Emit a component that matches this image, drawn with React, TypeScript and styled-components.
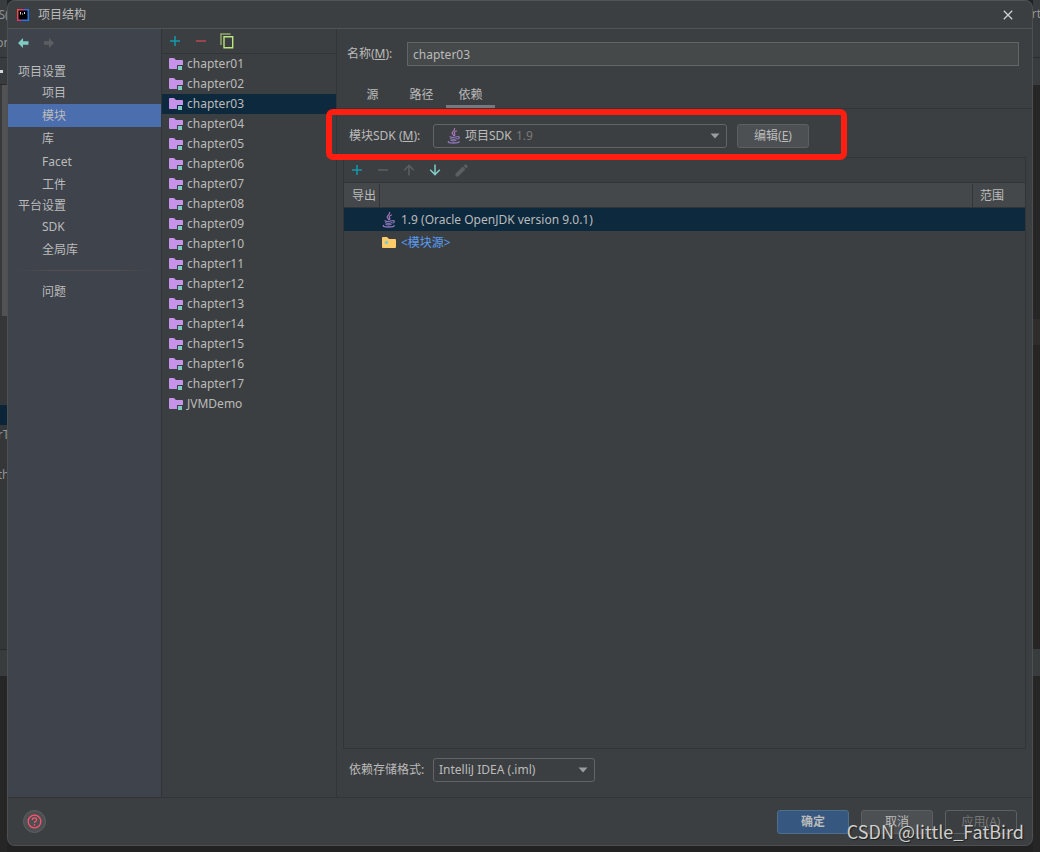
import React, { useState } from "react";
import styled, { createGlobalStyle, css } from "styled-components";

const GlobalStyle = createGlobalStyle`
  * { box-sizing: border-box; }
  body { margin: 0; background: #232323; }
  body, button, input, select, table {
    font-family: "Noto Sans", "Noto Sans CJK SC", sans-serif;
    font-size: 12px;
    line-height: 16px;
    color: #bbbbbb;
  }
  button, input, select { margin: 0; padding: 0; outline: none; }
  svg { display: block; flex: none; }
`;

const Desktop = styled.div`
  display: grid;
  grid-template-columns: 7px minmax(0, 1fr) 7px;
  min-height: 100vh;
  background: #222222;
`;

const Strip = styled.div`
  display: flex;
  flex-direction: column;
  overflow: hidden;
  width: 7px;
  background: #262626;
`;

const Slab = styled.div<{ $h: number; $bg: string; $line?: boolean; $center?: boolean }>`
  display: flex;
  flex: none;
  align-items: center;
  justify-content: ${(p) => (p.$center ? "center" : "flex-start")};
  height: ${(p) => p.$h}px;
  background: ${(p) => p.$bg};
  border-bottom: ${(p) => (p.$line ? "1px solid #2b2b2b" : "none")};
  white-space: nowrap;
  color: #8f9496;
`;

const ScrollThumb = styled.div`
  width: 5px;
  height: 100%;
  margin-left: 2px;
  background: #505254;
`;

const Dash = styled.div`
  width: 3px;
  height: 3px;
  background: #d8d8d8;
`;

const Dialog = styled.main`
  display: flex;
  flex-direction: column;
  margin-bottom: 7px;
  border: 1px solid #4d5052;
  border-top-color: #515456;
  border-radius: 8px;
  background: #3c3f41;
  position: relative;
`;

const TitleBar = styled.header`
  display: flex;
  align-items: center;
  height: 28px;
  padding: 0 17px 0 9px;
  gap: 9px;
  border-bottom: 1px solid #515355;
`;

const Title = styled.h1`
  flex: 1;
  margin: 0;
  font-size: 12px;
  font-weight: 400;
`;

const IconButton = styled.button`
  display: flex;
  align-items: center;
  justify-content: center;
  width: 14px;
  height: 16px;
  border: 0;
  background: transparent;
`;

const Body = styled.div`
  display: flex;
  flex: 1;
`;

const Sidebar = styled.nav`
  flex: none;
  width: 154px;
  border-right: 1px solid #323537;
  background: #3e434c;
`;

const History = styled.div`
  display: flex;
  align-items: center;
  gap: 12px;
  height: 28px;
  margin-bottom: 5px;
  padding-left: 8px;
`;

const GroupTitle = styled.h2`
  margin: 0;
  padding-left: 10px;
  font-size: 12px;
  font-weight: 400;
  line-height: 19px;
`;

const NavItem = styled.a<{ $active?: boolean }>`
  display: block;
  padding-left: 34px;
  line-height: 23px;
  color: #bbbbbb;
  text-decoration: none;
  background: ${(p) => (p.$active ? "#4b6eaf" : "transparent")};
`;

const Divider = styled.hr`
  height: 1px;
  margin: 9px 6px;
  border: 0;
  background: linear-gradient(90deg, transparent, #515151 30%, #515151 70%, transparent);
`;

const ModulePane = styled.section`
  flex: none;
  width: 175px;
  border-right: 1px solid #323537;
`;

const Toolbar = styled.div<{ $inset: number }>`
  display: flex;
  align-items: center;
  gap: 12px;
  height: 25px;
  padding-left: ${(p) => p.$inset}px;
  border-bottom: 1px solid #323537;
`;

const ModuleList = styled.ul`
  margin: 0;
  padding: 0;
  list-style: none;
`;

const ModuleItem = styled.li<{ $active: boolean }>`
  display: flex;
  align-items: center;
  gap: 4px;
  height: 20px;
  padding-left: 7px;
  background: ${(p) => (p.$active ? "#0d293e" : "transparent")};
`;

const Editor = styled.section`
  display: flex;
  flex: 1;
  flex-direction: column;
  min-width: 0;
`;

const NameRow = styled.div`
  display: flex;
  align-items: center;
  gap: 12px;
  padding: 13px 13px 0 10px;
`;

const NameInput = styled.input`
  flex: 1;
  height: 24px;
  padding: 0 5px;
  border: 1px solid #646464;
  background: #45494a;
`;

const Tabs = styled.div`
  display: flex;
  height: 43px;
  padding: 15px 0 0 11px;
  border-bottom: 1px solid #323537;
`;

const Tab = styled.button<{ $active: boolean }>`
  width: 49px;
  padding-top: 4px;
  border: 0;
  border-bottom: 3px solid ${(p) => (p.$active ? "#747a80" : "transparent")};
  background: transparent;
`;

const SdkRow = styled.div`
  display: flex;
  padding: 15px 12px 9px;
`;

const Highlighted = styled.div`
  position: relative;
  display: flex;
  align-items: center;
  gap: 10px;
`;

const Highlight = styled.div`
  position: absolute;
  inset: -15px -38px -12px -23px;
  border: 6px solid #ff1e10;
  border-radius: 7px;
  pointer-events: none;
`;

const Label = styled.label<{ $w?: number }>`
  flex: none;
  width: ${(p) => (p.$w ? `${p.$w}px` : "auto")};
  white-space: nowrap;
`;

const Combo = styled.div<{ $w: number; $inset: number }>`
  display: flex;
  align-items: center;
  width: ${(p) => p.$w}px;
  height: 24px;
  gap: 4px;
  padding: 0 6px 0 ${(p) => p.$inset}px;
  border: 1px solid #646464;
  border-radius: 3px;
`;

const Select = styled.select<{ $grow?: boolean }>`
  flex: ${(p) => (p.$grow ? "1" : "none")};
  height: 20px;
  border: 0;
  background: transparent;
  appearance: none;
`;

const Version = styled.span`
  flex: 1;
  color: #787878;
`;

const Button = styled.button<{ $kind?: "primary" | "disabled" }>`
  width: 72px;
  height: 24px;
  border: 1px solid #5e6060;
  border-radius: 3px;
  background: #4c5052;
  ${(p) =>
    p.$kind === "primary" &&
    css`
      border-color: #4c708c;
      background: #365880;
      font-weight: 700;
    `}
  ${(p) =>
    p.$kind === "disabled" &&
    css`
      background: transparent;
      color: #777777;
    `}
`;

const DependencyPane = styled.div`
  flex: 1;
  min-height: 592px;
  margin: 0 6px 0 7px;
  border: 1px solid #323537;
  border-left-width: 0;
  box-shadow: -1px 0 #323537;
`;

const Table = styled.table`
  width: 100%;
  border-collapse: separate;
  border-spacing: 0;
  table-layout: fixed;

  th, td { height: 23px; padding: 0; text-align: left; font-weight: 400; }
  th { height: 25px; background: #45484a; border-bottom: 1px solid #323537; }
`;

const HeadCell = styled.div<{ $inset: number; $split?: boolean }>`
  height: 23px;
  padding-left: ${(p) => p.$inset}px;
  line-height: 24px;
  border-right: ${(p) => (p.$split ? "1px solid #323537" : "none")};
`;

const DependencyRow = styled.tr<{ $active?: boolean }>`
  background: ${(p) => (p.$active ? "#0d293e" : "transparent")};
  color: ${(p) => (p.$active ? "#bbbbbb" : "#589df6")};
`;

const Dependency = styled.div`
  display: flex;
  align-items: center;
  gap: 5px;
  padding-left: 2px;
`;

const FormatRow = styled.div`
  display: flex;
  align-items: center;
  gap: 9px;
  padding: 9px 12px 15px;
`;

const Footer = styled.footer`
  display: flex;
  align-items: center;
  gap: 12px;
  height: 48px;
  padding: 0 15px;
  border-top: 1px solid #323537;
`;

const HelpButton = styled.button`
  display: flex;
  align-items: center;
  justify-content: center;
  width: 23px;
  height: 23px;
  margin-right: auto;
  border: 1px solid #5e6060;
  border-radius: 50%;
  background: #4c5052;
`;

const Watermark = styled.span`
  position: absolute;
  right: 8px;
  bottom: 1px;
  font-family: "Noto Sans CJK SC", sans-serif;
  font-size: 18px;
  line-height: 26px;
  color: #cfcfcf;
  text-shadow: 1px 1px 1px #1c1c1c;
  white-space: nowrap;
  pointer-events: none;
`;

const AppLogo = () => (
  <svg width="12" height="12" viewBox="0 0 12 12" aria-hidden="true">
    <defs>
      <linearGradient id="logo" x1="0" y1="0.2" x2="1" y2="0.5">
        <stop offset="0" stopColor="#f0503c" />
        <stop offset="0.4" stopColor="#e0307a" />
        <stop offset="0.6" stopColor="#2f6fe8" />
        <stop offset="1" stopColor="#1f7af0" />
      </linearGradient>
    </defs>
    <path d="M0 0H12V12H0Z" fill="url(#logo)" />
    <path d="M1.500 1.500H10.500V10.500H1.500Z" fill="#000" />
    <path d="M3.500 3V5.500M5.500 4.500V5.500M7.500 3V5" stroke="#ddd" strokeWidth="1" />
  </svg>
);

const CloseIcon = () => (
  <svg width="10" height="10" viewBox="0 0 10 10" aria-hidden="true">
    <path d="M0.800 0.800L9.200 9.200M9.200 0.800L0.800 9.200" stroke="#ced0d2" strokeWidth="1.300" />
  </svg>
);

const ArrowIcon = ({ color, flip }: { color: string; flip?: boolean }) => (
  <svg width="12" height="10" viewBox="0 0 12 10" aria-hidden="true">
    <path d={flip ? "M11 5L6 0V3.300H1V6.700H6V10Z" : "M1 5L6 0V3.300H11.500V6.700H6V10Z"} fill={color} />
  </svg>
);

const PlusIcon = () => (
  <svg width="12" height="12" viewBox="0 0 12 12" aria-hidden="true">
    <path d="M6 1V11M1 6H11" stroke="#139aad" strokeWidth="1.500" />
  </svg>
);

const MinusIcon = ({ color }: { color: string }) => (
  <svg width="12" height="12" viewBox="0 0 12 12" aria-hidden="true">
    <path d="M1 6H11" stroke={color} strokeWidth="1.500" />
  </svg>
);

const CopyIcon = () => (
  <svg width="14" height="16" viewBox="0 0 14 16" aria-hidden="true">
    <path d="M1 12V1H10.500" fill="none" stroke="#8fa96a" strokeWidth="1.500" />
    <path d="M4 3.800H12.700V14.700H4Z" fill="none" stroke="#bbe67e" strokeWidth="1.400" />
  </svg>
);

const VerticalArrow = ({ color, down }: { color: string; down?: boolean }) => (
  <svg width="12" height="12" viewBox="0 0 12 12" aria-hidden="true">
    <path
      d={down ? "M6 0.500V10.500M1.200 5.800L6 10.600L10.800 5.800" : "M6 11.500V1.500M1.200 6.200L6 1.400L10.800 6.200"}
      fill="none"
      stroke={color}
      strokeWidth="1.500"
    />
  </svg>
);

const PencilIcon = () => (
  <svg width="13" height="13" viewBox="0 0 13 13" aria-hidden="true">
    <path d="M0.500 12.500V9.800L7.800 2.500L10.500 5.200L3.200 12.500ZM8.600 1.700L10 0.400Q10.500 0 11 0.400L12.600 2Q13 2.500 12.600 3L11.300 4.400Z" fill="#5c5f61" />
  </svg>
);

const ModuleIcon = () => (
  <svg width="14" height="13" viewBox="0 0 14 13" aria-hidden="true">
    <path d="M0 1Q0 0 1 0H5L7 2H13Q14 2 14 3V7H8V11H1Q0 11 0 10Z" fill="#c792ea" />
    <path d="M9 8H13V12H9Z" fill="#80cbc4" />
  </svg>
);

const SourceFolderIcon = () => (
  <svg width="14" height="12" viewBox="0 0 14 12" aria-hidden="true">
    <path d="M0 1Q0 0 1 0H5L7 2H13Q14 2 14 3V10Q14 11 13 11H1Q0 11 0 10Z" fill="#ffcb6b" />
    <circle cx="4.500" cy="5.500" r="1.700" fill="#80cbc4" />
  </svg>
);

const JavaIcon = () => (
  <svg width="14" height="16" viewBox="0 0 14 16" fill="none" strokeLinecap="round" aria-hidden="true">
    <path d="M7.500 0.500C8.500 2.500 4.500 3.500 5.200 5.200C5.500 6 6.500 6.600 6.500 7.600M9.500 3C7.500 3.800 6.700 4.600 7.500 5.700C8 6.400 8 7 7.400 7.700" stroke="#a577b8" strokeWidth="1.200" />
    <path d="M3 8.700C4.500 9.500 8 9.400 9.600 8.800M3.500 10.700C5 11.300 8 11.300 9.500 10.700M4 12.500C5.500 13 7.600 13 9 12.500M10.500 8.600C13 8.300 12.800 10.300 10.800 11" stroke="#8d76ba" strokeWidth="1.200" />
    <path d="M1.500 13.500C0.500 14.300 3 15 6.500 15C10 15 12.500 14.500 12 13.500" stroke="#8d76ba" strokeWidth="1.300" />
  </svg>
);

const DropArrow = () => (
  <svg width="10" height="6" viewBox="0 0 10 6" aria-hidden="true">
    <path d="M0.500 0.500H9.500L5 5.500Z" fill="#9a9da0" />
  </svg>
);

const HelpIcon = () => (
  <svg width="15" height="15" viewBox="0 0 15 15" fill="none" stroke="#ff5370" aria-hidden="true">
    <circle cx="7.500" cy="7.500" r="6.300" strokeWidth="1.300" />
    <path d="M5.300 6C5.300 3.100 9.700 3.200 9.600 5.800C9.600 7.300 7.500 7.300 7.500 9.100" strokeWidth="1.300" />
    <path d="M7.500 10.200V11.600" strokeWidth="1.400" />
  </svg>
);

const modules = [
  ...Array.from({ length: 17 }, (_, i) => `chapter${String(i + 1).padStart(2, "0")}`),
  "JVMDemo",
];
const projectItems = ["项目", "模块", "库", "Facet", "工件"];
const platformItems = ["SDK", "全局库"];
const tabNames = ["源", "路径", "依赖"];

export default function App() {
  const [section, setSection] = useState("模块");
  const [module, setModule] = useState("chapter03");
  const [tab, setTab] = useState("依赖");

  const navItem = (name: string) => (
    <NavItem key={name} href="#" $active={name === section} onClick={() => setSection(name)}>
      {name}
    </NavItem>
  );

  return (
    <>
      <GlobalStyle />
      <Desktop>
        <Strip aria-hidden="true">
          <Slab $h={29} $bg="#3a3d3f" $center>S(</Slab>
          <Slab $h={29} $bg="#3a3d3f" $line $center>on</Slab>
          <Slab $h={27} $bg="#393c3e" $line><Dash /></Slab>
          <Slab $h={231} $bg="#37393b"><ScrollThumb /></Slab>
          <Slab $h={89} $bg="#343637" />
          <Slab $h={20} $bg="#0c2438" />
          <Slab $h={20} $bg="#343638" $center>rT</Slab>
          <Slab $h={20} $bg="#343638" />
          <Slab $h={20} $bg="#343638" $center>th</Slab>
          <Slab $h={165} $bg="#343738" $line />
          <Slab $h={26} $bg="#393c3d" />
        </Strip>
        <Dialog>
          <TitleBar>
            <AppLogo />
            <Title>项目结构</Title>
            <IconButton type="button" aria-label="关闭"><CloseIcon /></IconButton>
          </TitleBar>
          <Body>
            <Sidebar>
              <History>
                <IconButton type="button" aria-label="后退"><ArrowIcon color="#80cbc4" /></IconButton>
                <IconButton type="button" aria-label="前进" disabled><ArrowIcon color="#5c5f61" flip /></IconButton>
              </History>
              <GroupTitle>项目设置</GroupTitle>
              {projectItems.map(navItem)}
              <GroupTitle>平台设置</GroupTitle>
              {platformItems.map(navItem)}
              <Divider />
              {navItem("问题")}
            </Sidebar>
            <ModulePane>
              <Toolbar $inset={6}>
                <IconButton type="button" aria-label="添加"><PlusIcon /></IconButton>
                <IconButton type="button" aria-label="移除"><MinusIcon color="#b8494f" /></IconButton>
                <IconButton type="button" aria-label="复制"><CopyIcon /></IconButton>
              </Toolbar>
              <ModuleList>
                {modules.map((name) => (
                  <ModuleItem key={name} $active={name === module} onClick={() => setModule(name)}>
                    <ModuleIcon />
                    {name}
                  </ModuleItem>
                ))}
              </ModuleList>
            </ModulePane>
            <Editor>
              <NameRow>
                <Label htmlFor="name" $w={48}>名称(<u>M</u>):</Label>
                <NameInput id="name" value={module} onChange={(e) => setModule(e.target.value)} />
              </NameRow>
              <Tabs role="tablist">
                {tabNames.map((name) => (
                  <Tab key={name} type="button" role="tab" aria-selected={name === tab} $active={name === tab} onClick={() => setTab(name)}>
                    {name}
                  </Tab>
                ))}
              </Tabs>
              <SdkRow>
                <Highlighted>
                  <Label htmlFor="sdk" $w={74}>模块SDK (<u>M</u>):</Label>
                  <Combo $w={294} $inset={13}>
                    <JavaIcon />
                    <Select id="sdk"><option>项目SDK</option></Select>
                    <Version>1.9</Version>
                    <DropArrow />
                  </Combo>
                  <Button type="button">编辑(<u>E</u>)</Button>
                  <Highlight />
                </Highlighted>
              </SdkRow>
              <DependencyPane>
                <Toolbar $inset={6}>
                  <IconButton type="button" aria-label="添加"><PlusIcon /></IconButton>
                  <IconButton type="button" aria-label="移除" disabled><MinusIcon color="#5c5f61" /></IconButton>
                  <IconButton type="button" aria-label="上移" disabled><VerticalArrow color="#5c5f61" /></IconButton>
                  <IconButton type="button" aria-label="下移"><VerticalArrow color="#80cbc4" down /></IconButton>
                  <IconButton type="button" aria-label="编辑" disabled><PencilIcon /></IconButton>
                </Toolbar>
                <Table>
                  <colgroup>
                    <col style={{ width: 36 }} />
                    <col />
                    <col style={{ width: 52 }} />
                  </colgroup>
                  <thead>
                    <tr>
                      <th><HeadCell $inset={8} $split>导出</HeadCell></th>
                      <th aria-label="名称"><HeadCell $inset={0} $split /></th>
                      <th><HeadCell $inset={7}>范围</HeadCell></th>
                    </tr>
                  </thead>
                  <tbody>
                    <DependencyRow $active>
                      <td />
                      <td><Dependency><JavaIcon />1.9 (Oracle OpenJDK version 9.0.1)</Dependency></td>
                      <td />
                    </DependencyRow>
                    <DependencyRow>
                      <td />
                      <td><Dependency><SourceFolderIcon />&lt;模块源&gt;</Dependency></td>
                      <td />
                    </DependencyRow>
                  </tbody>
                </Table>
              </DependencyPane>
              <FormatRow>
                <Label htmlFor="format" $w={75}>依赖存储格式:</Label>
                <Combo $w={162} $inset={5}>
                  <Select id="format" $grow><option>IntelliJ IDEA (.iml)</option></Select>
                  <DropArrow />
                </Combo>
              </FormatRow>
            </Editor>
          </Body>
          <Footer>
            <HelpButton type="button" aria-label="帮助"><HelpIcon /></HelpButton>
            <Button type="button" $kind="primary">确定</Button>
            <Button type="button">取消</Button>
            <Button type="button" $kind="disabled" disabled>应用(A)</Button>
          </Footer>
          <Watermark>CSDN @little_FatBird</Watermark>
        </Dialog>
        <Strip aria-hidden="true">
          <Slab $h={28} $bg="#393c3e" $center>rt</Slab>
          <Slab $h={30} $bg="#393c3e" $line />
          <Slab $h={27} $bg="#393c3e" />
          <Slab $h={234} $bg="#262626" />
          <Slab $h={26} $bg="#2e2d2c" />
          <Slab $h={304} $bg="#262523" />
          <Slab $h={27} $bg="#393c3d" />
        </Strip>
      </Desktop>
    </>
  );
}
